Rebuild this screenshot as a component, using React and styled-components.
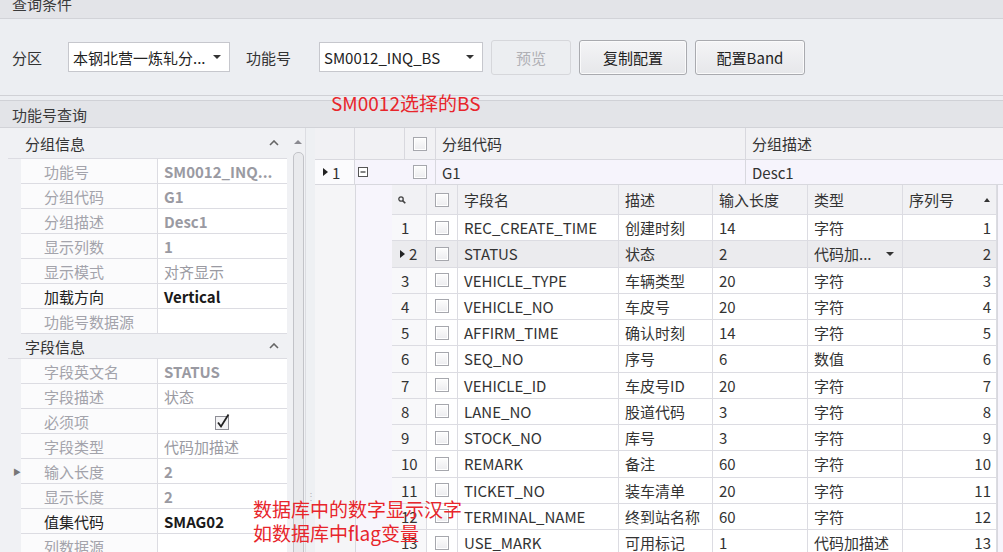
import styled, { createGlobalStyle } from "styled-components";

const GlobalStyle = createGlobalStyle`
  html, body { margin: 0; padding: 0; }
  body {
    font-family: "Noto Sans CJK SC", "Noto Sans", sans-serif;
    background: #eceef2;
  }
`;

const Screen = styled.div`
  position: relative;
  width: 1003px;
  height: 552px;
  overflow: hidden;
  background: #eceef2;
  color: #333;
  display: flex;
  flex-direction: column;
  font-size: 15px;
`;

const GroupTitle = styled.div`
  height: ${p => p.$h}px;
  flex: none;
  display: flex;
  align-items: center;
  padding-left: 12px;
  background: #e3e4e8;
  border-bottom: 1px solid #d2d3d8;
  color: #3a3a3a;
  overflow: hidden;
  span { margin-top: ${p => p.$shift || 0}px; }
`;

const QueryBar = styled.div`
  height: 76px;
  flex: none;
  display: flex;
  align-items: center;
  padding-left: 12px;
  border-bottom: 1px solid #d0d1d6;
`;

const GapLine = styled.div`
  height: 4px;
  flex: none;
  border-bottom: 1px solid #d0d1d6;
`;

const Label = styled.div`
  width: ${p => p.$w}px;
  flex: none;
  color: #333;
`;

const Combo = styled.div`
  width: ${p => p.$w}px;
  height: 30px;
  box-sizing: border-box;
  flex: none;
  display: flex;
  align-items: center;
  justify-content: space-between;
  padding: 0 8px 0 4px;
  background: #fff;
  border: 1px solid #c6c7cd;
  color: #222;
  margin-right: ${p => p.$mr || 0}px;
`;

const Caret = styled.span`
  width: 0;
  height: 0;
  border-left: 4px solid transparent;
  border-right: 4px solid transparent;
  border-top: 4px solid #333;
`;

const Button = styled.div`
  width: ${p => p.$w}px;
  height: 35px;
  box-sizing: border-box;
  flex: none;
  display: flex;
  align-items: center;
  justify-content: center;
  margin-left: ${p => p.$ml}px;
  border-radius: 3px;
  border: 1px solid ${p => (p.$disabled ? "#d6d7db" : "#a9aaaf")};
  background: ${p => (p.$disabled ? "#eceef1" : "linear-gradient(#f4f4f6, #e6e7ea)")};
  color: ${p => (p.$disabled ? "#b0b0b5" : "#222")};
  box-shadow: ${p => (p.$disabled ? "none" : "inset 0 0 0 1px #fafafb")};
`;

const Main = styled.div`
  flex: 1;
  display: flex;
  min-height: 0;
`;

const LeftPanel = styled.div`
  width: 305px;
  flex: none;
  display: flex;
  background: #f0f1f4;
  padding-left: 8px;
  box-sizing: border-box;
`;

const PropGrid = styled.div`
  width: 279px;
  flex: none;
  display: flex;
  flex-direction: column;
`;

const Category = styled.div`
  height: ${p => p.$h}px;
  flex: none;
  display: flex;
  align-items: center;
  justify-content: space-between;
  padding: 0 8px 0 17px;
  color: #333;
  border-bottom: 1px solid #dcdce2;
  box-sizing: border-box;
`;

const PropRow = styled.div`
  height: 25px;
  flex: none;
  display: grid;
  grid-template-columns: 13px 137px 1fr;
`;

const Indent = styled.div`
  display: flex;
  align-items: center;
  justify-content: flex-end;
  color: #777;
  font-size: 8px;
`;

const PropLabel = styled.div`
  display: flex;
  align-items: center;
  padding-left: 23px;
  background: #fbfbfc;
  border-right: 1px solid #dcdce2;
  border-bottom: 1px solid #dcdce2;
  color: ${p => (p.$active ? "#222" : "#a3a3ab")};
  white-space: nowrap;
`;

const PropValue = styled.div`
  display: flex;
  align-items: center;
  justify-content: ${p => (p.$center ? "center" : "flex-start")};
  padding-left: ${p => (p.$center ? 0 : 6)}px;
  background: #fff;
  border-bottom: 1px solid #dcdce2;
  color: ${p => (p.$active ? "#1a1a1a" : "#9a9aa2")};
  font-weight: ${p => (p.$bold ? 700 : 400)};
  white-space: nowrap;
  overflow: hidden;
`;

const ScrollTrack = styled.div`
  width: 18px;
  flex: none;
  display: flex;
  flex-direction: column;
  align-items: center;
  padding-left: 4px;
  box-sizing: border-box;
`;

const UpArrow = styled.div`
  margin-top: 12px;
  width: 0;
  height: 0;
  border-left: 4px solid transparent;
  border-right: 4px solid transparent;
  border-bottom: 4px solid #8a8a90;
`;

const Thumb = styled.div`
  flex: 1;
  width: 9px;
  margin-top: 8px;
  margin-bottom: -10px;
  border: 1px solid #c2c3c8;
  border-radius: 5px;
  background: #e9eaed;
`;

const Splitter = styled.div`
  width: 10px;
  flex: none;
  background: #eef0f3;
  border-left: 1px solid #dcdde2;
  display: flex;
  justify-content: center;
  padding-top: 363px;
  box-sizing: border-box;
  color: #b5b6bb;
  font-size: 10px;
  line-height: 1;
`;

const RightPanel = styled.div`
  flex: 1;
  display: flex;
  flex-direction: column;
  background: #f7f5fc;
  min-width: 0;
`;

const MasterRow = styled.div`
  height: ${p => p.$h}px;
  flex: none;
  display: grid;
  grid-template-columns: 40px 50px 31px 310px 1fr;
  background: ${p => (p.$head ? "#f1f1f4" : "#f6f4fc")};
  border-bottom: 1px solid #d8d8de;
  box-sizing: border-box;
`;

const MCell = styled.div`
  display: flex;
  align-items: center;
  justify-content: ${p => p.$justify || "flex-start"};
  padding-left: ${p => p.$pl ?? 6}px;
  border-right: ${p => (p.$noLine ? "none" : "1px solid #d8d8de")};
  background: ${p => p.$bg || "transparent"};
  color: #333;
  gap: 4px;
`;

const RowPointer = styled.span`
  width: 0;
  height: 0;
  border-top: 4px solid transparent;
  border-bottom: 4px solid transparent;
  border-left: 5px solid #222;
`;

const DetailArea = styled.div`
  flex: 1;
  display: flex;
  min-height: 0;
`;

const RowHeadFill = styled.div`
  width: 40px;
  flex: none;
  background: #f5f5f7;
  border-right: 1px solid #d8d8de;
`;

const DetailIndent = styled.div`
  width: 36px;
  flex: none;
`;

const DetailGrid = styled.div`
  width: 605px;
  flex: none;
  display: grid;
  grid-template-columns: 35px 31px 161px 94px 95px 95px 94px;
  grid-template-rows: 30px;
  grid-auto-rows: 26.25px;
  align-content: start;
  background: #fff;
  border-right: 1px solid #d8d8de;
`;

const DCell = styled.div`
  display: flex;
  align-items: center;
  justify-content: ${p => p.$justify || "flex-start"};
  padding: 0 ${p => p.$pr ?? 0}px 0 ${p => p.$pl ?? 6}px;
  border-right: 1px solid #dcdce2;
  border-bottom: 1px solid #dcdce2;
  background: ${p => (p.$head ? "#f1f1f4" : p.$selected ? "#ebebee" : p.$rowHead ? "#f8f8fa" : "#fff")};
  color: #333;
  white-space: nowrap;
  overflow: hidden;
  gap: 4px;
  min-width: 0;
`;

const Box = styled.span`
  width: 14px;
  height: 14px;
  box-sizing: border-box;
  border: 1px solid #a6a7ad;
  background: linear-gradient(#fdfdfd, #ececef);
  box-shadow: inset 0 0 0 1px #fff;
  flex: none;
`;

const SortArrow = styled.span`
  width: 0;
  height: 0;
  border-left: 3.5px solid transparent;
  border-right: 3.5px solid transparent;
  border-bottom: 4px solid #333;
  margin-right: 6px;
`;

const Note = styled.div`
  position: absolute;
  left: ${p => p.$x}px;
  top: ${p => p.$y}px;
  color: #e8252b;
  font-size: 19px;
  line-height: 24px;
  white-space: nowrap;
`;

const groupProps = [
  { label: "功能号", value: "SM0012_INQ...", bold: true },
  { label: "分组代码", value: "G1", bold: true },
  { label: "分组描述", value: "Desc1", bold: true },
  { label: "显示列数", value: "1", bold: true },
  { label: "显示模式", value: "对齐显示" },
  { label: "加载方向", value: "Vertical", bold: true, active: true },
  { label: "功能号数据源", value: "" },
];

const fieldProps = [
  { label: "字段英文名", value: "STATUS", bold: true },
  { label: "字段描述", value: "状态" },
  { label: "必须项", check: true },
  { label: "字段类型", value: "代码加描述" },
  { label: "输入长度", value: "2", bold: true, expand: true },
  { label: "显示长度", value: "2", bold: true },
  { label: "值集代码", value: "SMAG02", bold: true, active: true },
  { label: "列数据源", value: "" },
];

const rows = [
  ["REC_CREATE_TIME", "创建时刻", "14", "字符"],
  ["STATUS", "状态", "2", "代码加..."],
  ["VEHICLE_TYPE", "车辆类型", "20", "字符"],
  ["VEHICLE_NO", "车皮号", "20", "字符"],
  ["AFFIRM_TIME", "确认时刻", "14", "字符"],
  ["SEQ_NO", "序号", "6", "数值"],
  ["VEHICLE_ID", "车皮号ID", "20", "字符"],
  ["LANE_NO", "股道代码", "3", "字符"],
  ["STOCK_NO", "库号", "3", "字符"],
  ["REMARK", "备注", "60", "字符"],
  ["TICKET_NO", "装车清单", "20", "字符"],
  ["TERMINAL_NAME", "终到站名称", "60", "字符"],
  ["USE_MARK", "可用标记", "1", "代码加描述"],
];

function ChevronUp() {
  return (
    <svg width="10" height="6" viewBox="0 0 10 6">
      <path d="M1 5 L5 1 L9 5" fill="none" stroke="#666" strokeWidth="1.6" />
    </svg>
  );
}

function CheckMark() {
  return (
    <svg width="17" height="17" viewBox="0 0 17 17">
      <rect x="1.5" y="3.5" width="13" height="13" fill="#f3f3f5" stroke="#8e8e95" />
      <path d="M4 9.5 L7 13.5 L14.5 1.5" fill="none" stroke="#222" strokeWidth="1.8" />
    </svg>
  );
}

function MinusBox() {
  return (
    <svg width="10" height="10" viewBox="0 0 10 10">
      <rect x="0.5" y="0.5" width="9" height="9" fill="#fff" stroke="#555" />
      <path d="M2.5 5 H7.5" stroke="#333" strokeWidth="1.2" />
    </svg>
  );
}

function Magnifier() {
  return (
    <svg width="8" height="8" viewBox="0 0 8 8">
      <circle cx="3" cy="3" r="2.2" fill="none" stroke="#444" strokeWidth="1.3" />
      <path d="M4.6 4.6 L7.3 7.3" stroke="#444" strokeWidth="1.6" />
    </svg>
  );
}

function PropSection({ items }) {
  return items.map(item => (
    <PropRow key={item.label}>
      <Indent>{item.expand ? "▶" : ""}</Indent>
      <PropLabel $active={item.active}>{item.label}</PropLabel>
      <PropValue $active={item.active} $bold={item.bold} $center={item.check}>
        {item.check ? <CheckMark /> : item.value}
      </PropValue>
    </PropRow>
  ));
}

export default function App() {
  return (
    <Screen>
      <GlobalStyle />
      <GroupTitle $h={18} $shift={-11}><span>查询条件</span></GroupTitle>
      <QueryBar>
        <Label $w={56}>分区</Label>
        <Combo $w={162} $mr={16}>本钢北营一炼轧分...<Caret /></Combo>
        <Label $w={73}>功能号</Label>
        <Combo $w={164}>SM0012_INQ_BS<Caret /></Combo>
        <Button $w={80} $ml={8} $disabled>预览</Button>
        <Button $w={108} $ml={8}>复制配置</Button>
        <Button $w={110} $ml={8}>配置Band</Button>
      </QueryBar>
      <GapLine />
      <GroupTitle $h={26}><span>功能号查询</span></GroupTitle>
      <Main>
        <LeftPanel>
          <PropGrid>
            <Category $h={31}>分组信息<ChevronUp /></Category>
            <PropSection items={groupProps} />
            <Category $h={25}>字段信息<ChevronUp /></Category>
            <PropSection items={fieldProps} />
          </PropGrid>
          <ScrollTrack>
            <UpArrow />
            <Thumb />
          </ScrollTrack>
        </LeftPanel>
        <Splitter>⋮</Splitter>
        <RightPanel>
          <MasterRow $head $h={32}>
            <MCell />
            <MCell />
            <MCell $justify="center" $pl={0}><Box /></MCell>
            <MCell>分组代码</MCell>
            <MCell $noLine>分组描述</MCell>
          </MasterRow>
          <MasterRow $h={25}>
            <MCell $bg="#fbfbfd" $pl={8}><RowPointer />1</MCell>
            <MCell $pl={3} $noLine><MinusBox /></MCell>
            <MCell $justify="center" $pl={0}><Box /></MCell>
            <MCell>G1</MCell>
            <MCell $noLine>Desc1</MCell>
          </MasterRow>
          <DetailArea>
            <RowHeadFill />
            <DetailIndent />
            <DetailGrid>
              <DCell $head $pl={6}><Magnifier /></DCell>
              <DCell $head $justify="center" $pl={0}><Box /></DCell>
              <DCell $head>字段名</DCell>
              <DCell $head>描述</DCell>
              <DCell $head>输入长度</DCell>
              <DCell $head>类型</DCell>
              <DCell $head $justify="space-between">序列号<SortArrow /></DCell>
              {rows.map((r, i) => {
                const sel = i === 1;
                return [
                  <DCell key={`n${i}`} $rowHead $selected={sel} $pl={sel ? 8 : 9}>
                    {sel && <RowPointer />}{i + 1}
                  </DCell>,
                  <DCell key={`c${i}`} $selected={sel} $justify="center" $pl={0}><Box /></DCell>,
                  <DCell key={`f${i}`} $selected={sel}>{r[0]}</DCell>,
                  <DCell key={`d${i}`} $selected={sel}>{r[1]}</DCell>,
                  <DCell key={`l${i}`} $selected={sel}>{r[2]}</DCell>,
                  <DCell key={`t${i}`} $selected={sel} $justify={sel ? "space-between" : "flex-start"} $pr={sel ? 8 : 0}>
                    {r[3]}{sel && <Caret />}
                  </DCell>,
                  <DCell key={`s${i}`} $selected={sel} $justify="flex-end" $pr={5}>{i + 1}</DCell>,
                ];
              })}
            </DetailGrid>
          </DetailArea>
        </RightPanel>
      </Main>
      <Note $x={331} $y={91}>SM0012选择的BS</Note>
      <Note $x={253} $y={497}>数据库中的数字显示汉字<br />如数据库中flag变量</Note>
    </Screen>
  );
}
